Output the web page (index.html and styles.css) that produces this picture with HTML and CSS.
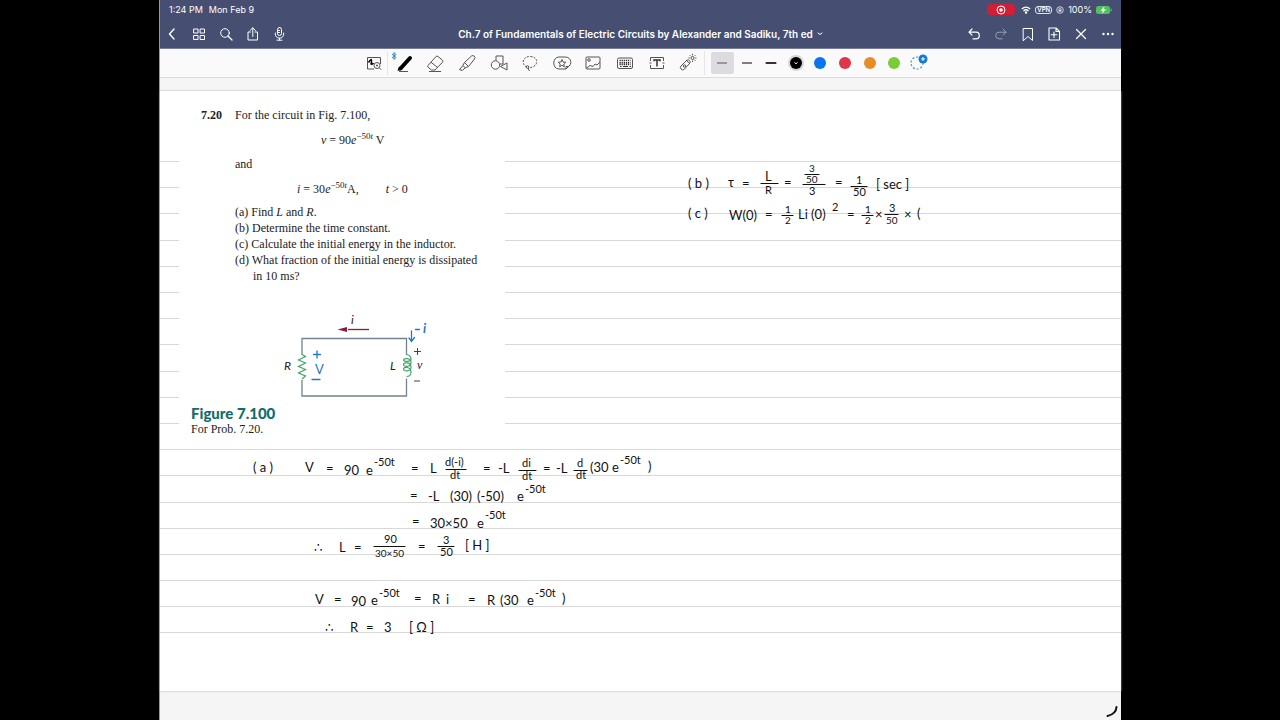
FILE: index.html
```html
<!DOCTYPE html>
<html lang="en">
<head>
<meta charset="utf-8">
<title>Ch.7 of Fundamentals of Electric Circuits</title>
<link rel="stylesheet" href="styles.css">
</head>
<body>
<div class="tablet">
  <header class="top">
    <div class="status">
      <span>1:24 PM</span><span class="date">Mon Feb 9</span>
      <span class="rec"><svg width="10" height="10" viewBox="0 0 10 10"><circle cx="5" cy="5" r="4" fill="none" stroke="#fff"/><circle cx="5" cy="5" r="1.8" fill="#fff"/></svg></span>
      <svg width="10" height="8" viewBox="0 0 10 8" fill="none" stroke="#fff" stroke-width="1.3"><path d="M.8 3Q5-.8 9.200 3M2.500 4.900Q5 2.700 7.500 4.900"/><circle cx="5" cy="6.600" r=".6" fill="#fff"/></svg>
      <span class="vpn">VPN</span>
      <svg width="8" height="8" viewBox="0 0 8 8" fill="none" stroke="#e5e8f2"><circle cx="4" cy="4" r="3.300" stroke-width=".8"/><path d="M3 4V3a1 1 0 0 1 2 0v1" stroke-width=".7"/><path d="M2.600 3.800h2.800v1.800H2.600z" fill="#e5e8f2" stroke="none"/></svg>
      <span>100%</span>
      <svg width="16" height="8" viewBox="0 0 16 8"><rect width="14" height="8" rx="2.500" fill="#4fc35c"/><path d="M15.200 2.800v2.400" stroke="#4fc35c" stroke-width="1.200"/><path d="M8.500.3 4.500 4.700h2.300L6 7.700l4-4.400H7.700z" fill="#fff"/></svg>
    </div>
    <nav class="nav">
      <div class="left">
        <button aria-label="Back"><svg viewBox="0 0 16 16"><path d="M10 3 5.500 8l4.500 5" stroke-width="1.400"/></svg></button>
        <button aria-label="Thumbnails"><svg viewBox="0 0 16 16"><path d="M3 3h4v4H3zM9.500 3h4v4h-4zM3 9.500h4v4H3zM9.500 9.500h4v4h-4z"/></svg></button>
        <button aria-label="Search"><svg viewBox="0 0 16 16"><circle cx="7" cy="7" r="4.300"/><path d="m10 10 4 4" stroke-width="1.300"/></svg></button>
        <button aria-label="Share"><svg viewBox="0 0 16 16"><path d="M5.500 6H3v8h9.500V6H10M7.800 10.500V2M5 4.500 7.800 1.800l2.700 2.700"/></svg></button>
        <button aria-label="Record"><svg viewBox="0 0 16 16"><rect x="5.500" y="1.500" width="4" height="8" rx="2"/><path d="M3.300 7v1a4.200 4.200 0 0 0 8.400 0V7M7.500 12.200V14M5 14.200h5M5.500 4.500h2M5.500 6.500h2"/></svg></button>
      </div>
      <h1 class="title"><button>Ch.7 of Fundamentals of Electric Circuits by Alexander and Sadiku, 7th ed<svg class="chev" viewBox="0 0 6 4"><path d="m1 1 2 1.500L5 1"/></svg></button></h1>
      <div class="right">
        <button aria-label="Undo"><svg viewBox="0 0 16 16"><path d="M6 3 3 6.200l3 3M3 6.200h7a3.300 3.300 0 0 1 0 6.600H7" stroke-width="1.200"/></svg></button>
        <button class="dim" aria-label="Redo"><svg viewBox="0 0 16 16"><path d="m10 3 3 3.200-3 3M13 6.200H6a3.300 3.300 0 0 0 0 6.600h3"/></svg></button>
        <button aria-label="Bookmark"><svg viewBox="0 0 16 16"><path d="M3.500 2.500h9v12L8 10.500l-4.500 4z"/></svg></button>
        <button aria-label="Add page"><svg viewBox="0 0 16 16"><path d="M3 2h7l3.500 3.500V14H3zM10 2v3.500h3.500M8 6v5.500M5.200 8.700h5.600" stroke-width="1.100"/></svg></button>
        <button aria-label="Close"><svg viewBox="0 0 16 16"><path d="m3.500 3.500 9 9m0-9-9 9" stroke-width="1.200"/></svg></button>
        <button aria-label="More"><svg viewBox="0 0 16 16"><g fill="#fff" stroke="none"><circle cx="3.500" cy="8" r="1.200"/><circle cx="8" cy="8" r="1.200"/><circle cx="12.500" cy="8" r="1.200"/></g></svg></button>
      </div>
    </nav>
  </header>

  <div class="toolbar" role="toolbar" aria-label="Drawing tools">
    <button class="scan" aria-label="Zoom window"><svg viewBox="0 0 20 20"><path d="M10 16H3.500V4.500h13V11"/><path d="M4.500 9.500Q7.500 5 7.500 7.500T7 11q1 .8 2.500-1" stroke="#000" stroke-width="1.500"/><circle cx="13" cy="12.500" r="3"/><path d="m15.200 14.700 2 2M12 12.500h2M13 11.500v2"/></svg></button>
    <span class="sep"></span>
    <div class="tools">
      <button aria-label="Pen"><svg viewBox="0 0 20 20"><path d="M6.500 15.500 16 5" stroke="#000" stroke-width="4" stroke-linecap="round"/><path d="m3.500 18 1.500-4.500 3.500 3z" fill="#000" stroke="none"/><path d="M5 18.500h9"/></svg><svg class="bt" viewBox="0 0 6 8"><path d="m1 2 4 3.500L3 7.500v-7l2 2L1 6"/></svg></button>
      <button aria-label="Eraser"><svg viewBox="0 0 20 20"><path d="m3 12.500 8-9q1-1 2 0l4.500 3.700q1 1 0 2L10 17H6.500L3 14.200q-.7-.9 0-1.700zM6 9.300l7 5.500M4 18.500h12"/></svg></button>
      <button aria-label="Highlighter"><svg viewBox="0 0 20 20"><path d="m7.500 9.500 7-6.500q1.500-1 2.800.2t.2 2.800L11.500 13.500zM7.500 9.500l-1.700 3 2.500 2.300 3.200-1.300M5.800 12.500l-3.300 4.300 3 .5 2.800-2.500"/></svg></button>
      <button aria-label="Shapes"><svg viewBox="0 0 20 20"><path d="M7 7.500V3h7v8h-3M18 10v7l-6.500-3.500z"/><circle cx="6.500" cy="12" r="4.200"/></svg></button>
      <button aria-label="Lasso"><svg viewBox="0 0 20 20"><path d="M7 14C1 12 2 3.500 10 3.500s9 8 2.500 10.500L8 15.500" stroke-dasharray="2 1.300"/><circle cx="7.500" cy="14" r="1.300"/><path d="m8 15.500 1.500 2.500"/></svg></button>
      <button aria-label="Stickers"><svg viewBox="0 0 20 20"><path d="M14 16H7C0 16 0 4 7 4h6c7 0 7 8 3.500 9.500H14z"/><path d="m10 6.500 1.100 2.500 2.700.2-2 1.800.6 2.700L10 12.300l-2.400 1.400.6-2.700-2-1.800 2.700-.2zM14 16l4-4"/></svg></button>
      <button aria-label="Image"><svg viewBox="0 0 20 20"><rect x="3" y="4" width="14" height="12" rx="1"/><circle cx="6" cy="7" r="1.300"/><path d="m3 15.500 4-3 3 1 2-2.500 2 1 3-3"/></svg></button>
      <button aria-label="Keyboard"><svg viewBox="0 0 20 20"><rect x="2.500" y="5" width="15" height="10.500" rx="1.500"/><path d="M4.500 7.500h11M4.500 9.700h11M4.500 11.500h11" stroke-dasharray="1.300 .8" stroke-width="1.400" stroke="#333"/><path d="M5 13.500h1.500m1.500 0h5m1.500 0H16" stroke="#333"/></svg></button>
      <button aria-label="Text"><svg viewBox="0 0 20 20"><path d="M3.500 8V4.500h13V8m0 4v3.500h-13V12M2.500 10h2m11 0h2"/><path d="M7 8.200V7h6v1.200M10 7v6.500" stroke-width="1.500" stroke="#333"/></svg></button>
      <button aria-label="Laser pointer"><svg viewBox="0 0 20 20"><path d="m3 13 6-6q1.500-.5 2.500.5t.5 2.500l-6 6.500q-1.500 1-3-.5T3 13zM8.500 7.500l3.500 3.300"/><circle cx="6.500" cy="13" r="1.200"/><circle cx="14.500" cy="5" r="1.500"/><path d="M14.500.8v1.500m0 5.200V9M10.500 5h1.300m5.400 0h1.300M11.700 2.200l1 1m3.600 3.600 1 1m0-5.600-1 1"/></svg></button>
    </div>
    <span class="sep"></span>
    <div class="swatches">
      <button class="on" aria-label="Thin"><svg viewBox="0 0 20 20"><path d="M5 10h10"/></svg></button>
      <button aria-label="Medium"><svg viewBox="0 0 20 20"><path d="M5 10h10" stroke-width="1.500"/></svg></button>
      <button aria-label="Thick"><svg viewBox="0 0 20 20"><path d="M5.500 10h9" stroke="#333" stroke-width="2.200" stroke-linecap="round"/></svg></button>
      <button aria-label="Black"><svg viewBox="0 0 20 20"><circle cx="10" cy="10" r="8" fill="#d6d6d9" stroke="none"/><circle cx="10" cy="10" r="6" fill="#000" stroke="none"/><path d="m8.500 9.500 1.500 1.200 1.500-1.200" stroke="#fff"/></svg></button>
      <button aria-label="Blue"><span class="dot blue"></span></button>
      <button aria-label="Red"><span class="dot red"></span></button>
      <button aria-label="Orange"><span class="dot orange"></span></button>
      <button aria-label="Green"><span class="dot green"></span></button>
      <button aria-label="Add colour"><svg viewBox="0 0 20 20"><circle cx="8" cy="10" r="6" stroke="#4f8fc4" stroke-width="1.200" stroke-dasharray="2 1.800"/><circle cx="14" cy="6" r="4.500" fill="#1479d2" stroke="none"/><path d="M14 4v4m-2-2h4" stroke="#fff"/></svg></button>
    </div>
  </div>

  <main class="desk">
    <div class="sheet">
      <svg class="rules" width="100%" height="600" aria-hidden="true">
        <rect y="70"/><rect y="96"/><rect y="122"/><rect y="149"/><rect y="175"/><rect y="201"/><rect y="227"/><rect y="253"/><rect y="280"/><rect y="306"/><rect y="332"/><rect y="358"/><rect y="384"/><rect y="411"/><rect y="437"/><rect y="463"/><rect y="489"/><rect y="515"/><rect y="541"/>
      </svg>
      <section class="problem">
        <div class="statement">
          <b>7.20</b>
          <div>
            <p>For the circuit in Fig. 7.100,</p>
            <p class="eq first"><i>v</i> = 90<i>e</i><sup>−50<i>t</i></sup> V</p>
            <p class="and">and</p>
            <p class="eq second"><span><i>i</i> = 30<i>e</i><sup>−50<i>t</i></sup>A,</span><span><i>t</i> &gt; 0</span></p>
            <p>(a) Find <i>L</i> and <i>R</i>.</p>
            <p>(b) Determine the time constant.</p>
            <p>(c) Calculate the initial energy in the inductor.</p>
            <p class="hang">(d) What fraction of the initial energy is dissipated in 10 ms?</p>
          </div>
        </div>
        <figure>
          <svg class="circuit" width="180" height="90" viewBox="270 313 180 90">
            <path class="wire" d="M302 356V339.500H406.500V356M302 381V397H406.500V379.500"/>
            <path class="part" d="M302 355.500l3.500 2-7 3.500 7 3-7 3.500 7 3-7 3.500 7 3-3.500 3"/>
            <path class="part" d="M406.500 355.500q4.500 1 4.500 4.500c0 3-7.500 3-7.500 1s7.500-2.500 7.500 2.500-7.500 4.500-7.500 2 7.500-2.500 7.500 2.500-7.500 4.500-7.500 2 7.500-2.500 7.500 3q0 4.500-4.500 4.500"/>
            <path d="M348 330.500h21" stroke="#8b1a3c" stroke-width="1.300"/><path d="M337.500 330.500l9.500-2.500v5z" fill="#8b1a3c"/>
            <path class="sign" d="M414 352.500h7M417.500 349v7M414 382h6"/>
            <text x="351" y="325">i</text><text x="284" y="371">R</text><text x="390" y="371">L</text><text class="volt" x="417" y="370">v</text>
          </svg>
          <figcaption><strong>Figure 7.100</strong>For Prob. 7.20.</figcaption>
        </figure>
      </section>
      <svg class="ink" width="962" height="629" viewBox="159 91 962 629">
        <g class="blue-ink">
          <path d="M317 351v7M313.500 354.500h7M312 379.500h8M411.500 331v10M409 338l2.500 3.500 3-4M415.500 329.500h4"/>
          <text x="315" y="374">V</text><text class="slant" x="423" y="333">i</text>
        </g>
        <g>
          <text x="253" y="472">( a )</text><text x="305" y="472">V</text><text x="326" y="473">=</text><text x="344" y="475">90</text><text x="366" y="475">e</text><text class="sm" x="374" y="466">-50t</text>
          <text x="411" y="473">=</text><text x="430" y="473">L</text><text class="sm" x="445" y="466">d(-i)</text><text class="sm" x="450" y="479">dt</text>
          <text x="483" y="473">=</text><text x="498" y="473">-L</text><text class="sm" x="522" y="467">di</text><text class="sm" x="522" y="480">dt</text>
          <text x="543" y="473">=</text><text x="556" y="473">-L</text><text class="sm" x="577" y="467">d</text><text class="sm" x="576" y="479">dt</text>
          <text x="590" y="472">(30</text><text x="612" y="472">e</text><text class="sm" x="620" y="464">-50t</text><text x="648" y="471">)</text>
        </g>
        <g>
          <text x="410" y="500">=</text><text x="428" y="501">-L</text><text x="450" y="501">(30)</text><text x="477" y="501">(-50)</text><text x="517" y="501">e</text><text class="sm" x="525" y="493">-50t</text>
          <text x="412" y="526">=</text><text x="430" y="528">30×50</text><text x="477" y="528">e</text><text class="sm" x="485" y="519">-50t</text>
        </g>
        <g>
          <text x="314" y="552">∴</text><text x="339" y="552">L</text><text x="354" y="552">=</text><text class="sm" x="384" y="543">90</text><text class="xs" x="375" y="557">30×50</text>
          <text x="418" y="551">=</text><text class="sm" x="443" y="544">3</text><text class="sm" x="440" y="556">50</text><text x="465" y="550">[ H ]</text>
        </g>
        <g>
          <text x="315" y="604">V</text><text x="334" y="604">=</text><text x="351" y="606">90</text><text x="371" y="605">e</text><text class="sm" x="379" y="597">-50t</text>
          <text x="414" y="603">=</text><text x="432" y="604">R</text><text x="446" y="604">i</text><text x="468" y="604">=</text><text x="487" y="605">R</text><text x="500" y="605">(30</text><text x="527" y="605">e</text><text class="sm" x="535" y="597">-50t</text><text x="562" y="603">)</text>
          <text x="325" y="632">∴</text><text x="350" y="632">R</text><text x="366" y="632">=</text><text x="384" y="632">3</text><text x="409" y="632">[ Ω ]</text>
        </g>
        <g>
          <text x="688" y="188">( b )</text><text x="728" y="187">τ</text><text x="742" y="188">=</text><text x="765" y="181">L</text><text class="sm" x="765" y="194">R</text><text x="784" y="187">=</text>
          <text class="xs" x="809" y="172">3</text><text class="xs" x="806" y="183">50</text><text class="sm" x="809" y="195">3</text><text x="835" y="187">=</text><text class="sm" x="856" y="184">1</text><text class="sm" x="853" y="196">50</text><text x="876" y="189">[ sec ]</text>
          <text x="688" y="218">( c )</text><text x="729" y="220">W(0)</text><text x="765" y="219">=</text><text class="xs" x="785" y="213">1</text><text class="xs" x="785" y="224">2</text><text x="798" y="219">Li (0)</text><text class="sm" x="832" y="211">2</text>
          <text x="847" y="219">=</text><text class="xs" x="865" y="213">1</text><text class="xs" x="865" y="224">2</text><text x="875" y="219">×</text><text class="sm" x="889" y="212">3</text><text class="xs" x="886" y="224">50</text><text x="904" y="219">×</text><text x="917" y="218">(</text>
        </g>
        <path class="bars" d="M446 469.500h20M519 470.500h17M574 470.500h13M374 546.500h31M438 546.500h16M761 183.500h17M805 174.500h14M803 184.500h22M851 186.500h16M782 215.500h11M862 215.500h11M885 214.500h13"/>
        <path class="stroke" d="M1116.500 707q-.5 7-9 9"/>
      </svg>
    </div>
  </main>
</div>
</body>
</html>
```
FILE: styles.css
```css
* { box-sizing: border-box; }
body { margin: 0; background: #000; font-family: Inter, "Liberation Sans", sans-serif; }
button { padding: 0; border: 0; background: none; color: inherit; font: inherit; display: flex; align-items: center; justify-content: center; position: relative; }
.tablet { margin: 0 159px; min-height: 100vh; display: flex; flex-direction: column; background: #f5f5f6; border-left: 1px solid #999; }

.top { background: #464f72; color: #fff; border-bottom: 1px solid #777d96; }
.status { display: flex; align-items: center; gap: 4px; height: 19px; padding: 0 9px; font-size: 9px; }
.date { margin-left: 2px; }
.rec { margin: 0 2px 0 auto; width: 28px; height: 11px; border-radius: 4px; background: #d21f35; display: flex; align-items: center; justify-content: center; }
.vpn { border: 1px solid #dfe2ec; border-radius: 3px; padding: 0 1px; font-size: 6px; line-height: 6px; font-weight: 600; }
.nav { display: grid; grid-template-columns: 160px 1fr 160px; align-items: center; height: 29px; }
.left { display: grid; grid-template-columns: repeat(5, 1fr); width: 134px; margin-left: -1px; }
.right { display: grid; grid-template-columns: repeat(6, 1fr); }
.nav svg { width: 16px; height: 16px; fill: none; stroke: #fff; stroke-linecap: round; stroke-linejoin: round; }
.nav .dim { opacity: .45; }
.title { margin: 0; font-size: 10px; font-weight: 600; white-space: nowrap; display: flex; justify-content: center; }
.nav .chev { width: 6px; height: 4px; margin-left: 4px; }

.toolbar { display: flex; align-items: center; justify-content: center; height: 29px; padding-left: 11px; background: #fafafa; border-bottom: 1px solid #dcdcde; }
.toolbar svg { width: 20px; height: 20px; fill: none; stroke: #555; stroke-width: 1; flex: none; }
.scan { width: 26px; }
.sep { width: 1px; height: 24px; background: #e6e6e8; }
.tools { display: grid; grid-template-columns: repeat(10, 1fr); width: 316px; }
.toolbar .bt { position: absolute; left: 3px; top: -1px; width: 6px; height: 8px; stroke: #2584c6; }
.swatches { display: grid; grid-template-columns: repeat(9, 1fr); width: 221px; margin-left: 5px; }
.swatches button { height: 22px; border-radius: 2px; }
.swatches .on { background: #dcdbe0; margin: 0 1px; }
.dot { width: 12px; height: 12px; border-radius: 50%; }
.blue { background: #0874ef; }
.red { background: #df3549; }
.orange { background: #e78d28; }
.green { background: #78cc36; }

.desk { flex: 1; padding-top: 13px; padding-bottom: 29px; display: flex; }
.sheet { position: relative; flex: 1; background: #fff; box-shadow: 0 0 2px #aaa; padding: 12px 20px 0 19px; }
.rules { position: absolute; left: 0; top: 0; }
.rules rect { width: 100%; height: 1px; fill: #d8d8d9; }
.problem { position: relative; width: 326px; background: #fff; padding: 4px 0 0 12px; font: 12px/16px "Liberation Serif", serif; color: #222; }
.problem p { margin: 0; }
.statement { display: flex; padding-left: 10px; }
.statement > b { width: 34px; }
.statement > div { flex: 1; }
.statement sup { font-size: 9px; line-height: 0; }
.statement .eq { margin: 9px 0 8px; }
.statement .first { padding-left: 86px; }
.statement .second { margin-bottom: 7px; padding-left: 62px; display: flex; gap: 27px; }
.statement .hang { padding-left: 18px; text-indent: -18px; padding-right: 22px; }
figure { margin: 28px 0 0; }
.circuit { display: block; margin-left: 79px; fill: none; }
.circuit text { font: italic 12px Lato, sans-serif; fill: #222; }
.circuit .volt { font: italic 12px "Liberation Serif", serif; }
.wire { stroke: #71838d; stroke-width: 1.3; }
.part { stroke: #43a468; stroke-width: 1.2; }
.sign { stroke: #444; }
figcaption { padding: 4px 0 2px; }
figcaption strong { display: block; font: 900 15px/15px Lato, sans-serif; color: #126c6c; }

.ink { position: absolute; left: -1px; top: 0; }
.ink text { font: 13px Lato, "DejaVu Sans", sans-serif; fill: #111; }
.ink .sm { font-size: 11px; }
.ink .xs { font-size: 10px; }
.ink path { fill: none; stroke: #111; stroke-linecap: round; }
.ink .bars { stroke-width: 1.2; }
.ink .stroke { stroke-width: 2; }
.ink .blue-ink path { stroke: #1f78cc; stroke-width: 1.3; }
.ink .blue-ink text { fill: #1f78cc; }
.ink .blue-ink .slant { font-style: italic; font-weight: 700; }
```
